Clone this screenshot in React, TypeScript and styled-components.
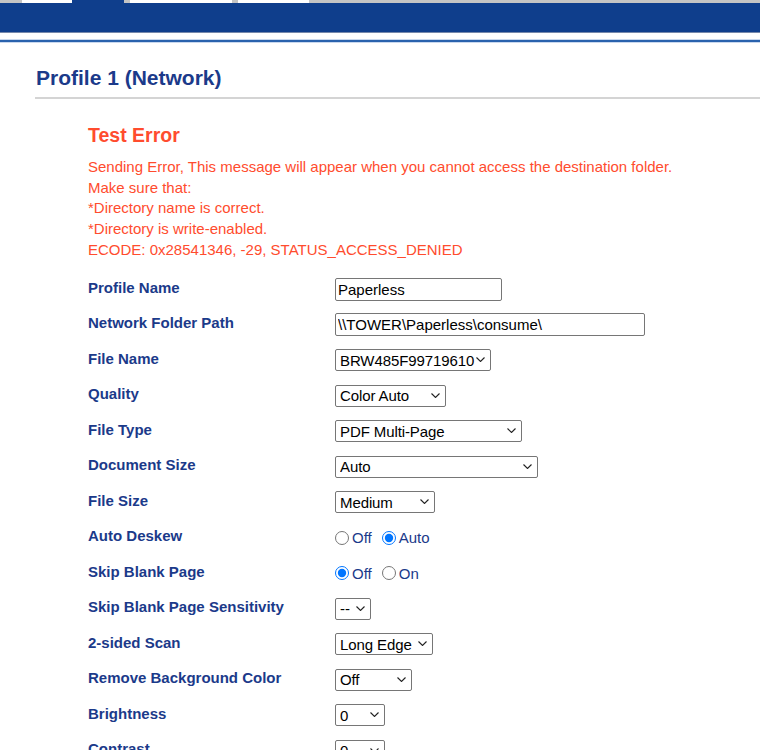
import React from 'react';
import styled, { createGlobalStyle } from 'styled-components';

const GlobalStyle = createGlobalStyle`
  html, body {
    margin: 0;
    padding: 0;
    background: #ffffff;
    overflow: hidden;
  }
  body {
    font-family: 'Liberation Sans', Arial, sans-serif;
    font-size: 15px;
  }
`;

const NAVY = '#1b3a8a';
const BAR = '#0f3e8c';
const ERROR = '#ff4c2e';

const Page = styled.div`
  width: 760px;
  height: 750px;
  overflow: hidden;
`;

const TabStrip = styled.div`
  display: flex;
  height: 3px;
  background: #c4c4c4;
`;

const Tab = styled.div<{ $w: number; $tone: 'gray' | 'white' | 'active' }>`
  flex: 0 0 ${(p) => p.$w}px;
  background: ${(p) => (p.$tone === 'white' ? '#ffffff' : p.$tone === 'active' ? BAR : '#c4c4c4')};
`;

const NavBar = styled.div`
  height: 29px;
  background: ${BAR};
  border-bottom: 1px solid #7688ab;
`;

const AccentLine = styled.div`
  margin-top: 6px;
  height: 2px;
  background: #2a62ad;
  border-top: 1px solid #c9d8ee;
  border-bottom: 1px solid #c9d8ee;
`;

const Title = styled.h1`
  margin: 22px 0 0 35px;
  padding: 0 0 6px 1px;
  font-size: 21px;
  font-weight: bold;
  color: ${NAVY};
  border-bottom: 2px solid #d4d4d4;
  line-height: 26px;
`;

const Content = styled.div`
  padding: 0 0 0 88px;
`;

const ErrorHeading = styled.h2`
  margin: 24px 0 0;
  font-size: 19.5px;
  font-weight: bold;
  color: ${ERROR};
  line-height: 24px;
`;

const ErrorText = styled.p`
  margin: 10px 0 0;
  font-size: 15px;
  line-height: 20.7px;
  color: ${ERROR};
`;

const Form = styled.div`
  margin-top: 11px;
  display: grid;
  grid-template-columns: 247px 1fr;
  grid-auto-rows: 35.5px;
  align-items: center;
`;

const Label = styled.div`
  font-size: 15px;
  font-weight: bold;
  color: ${NAVY};
  line-height: 18px;
  margin-top: -3px;
`;

const Control = styled.div`
  display: flex;
  align-items: center;
  gap: 10px;
`;

const TextInput = styled.input<{ $w: number }>`
  box-sizing: border-box;
  width: ${(p) => p.$w}px;
  height: 23px;
  padding: 1px 2px;
  border: 1px solid #767676;
  border-radius: 2px;
  font-family: 'Liberation Sans', Arial, sans-serif;
  font-size: 15px;
  color: #000;
`;

const SelectWrap = styled.div`
  position: relative;
  display: inline-flex;
`;

const Select = styled.select<{ $w: number }>`
  box-sizing: border-box;
  appearance: none;
  width: ${(p) => p.$w}px;
  height: 22px;
  padding: 0 12px 0 4px;
  border: 1px solid #767676;
  border-radius: 2px;
  background: #fff;
  font-family: 'Liberation Sans', Arial, sans-serif;
  font-size: 15px;
  letter-spacing: -0.1px;
  color: #000;
`;

const Chevron = styled.svg`
  position: absolute;
  right: 6px;
  top: 8px;
  width: 9px;
  height: 5px;
  pointer-events: none;
`;

const RadioLabel = styled.label`
  display: inline-flex;
  align-items: center;
  color: ${NAVY};
  font-size: 15px;

  input {
    margin: 0 3px 0 0;
    width: 14px;
    height: 14px;
  }
`;

type Field =
  | { label: string; kind: 'text'; value: string; w: number }
  | { label: string; kind: 'select'; value: string; w: number }
  | { label: string; kind: 'radio'; options: string[]; checked: number };

const fields: Field[] = [
  { label: 'Profile Name', kind: 'text', value: 'Paperless', w: 167 },
  { label: 'Network Folder Path', kind: 'text', value: '\\\\TOWER\\Paperless\\consume\\', w: 310 },
  { label: 'File Name', kind: 'select', value: 'BRW485F99719610', w: 156 },
  { label: 'Quality', kind: 'select', value: 'Color Auto', w: 111 },
  { label: 'File Type', kind: 'select', value: 'PDF Multi-Page', w: 187 },
  { label: 'Document Size', kind: 'select', value: 'Auto', w: 203 },
  { label: 'File Size', kind: 'select', value: 'Medium', w: 100 },
  { label: 'Auto Deskew', kind: 'radio', options: ['Off', 'Auto'], checked: 1 },
  { label: 'Skip Blank Page', kind: 'radio', options: ['Off', 'On'], checked: 0 },
  { label: 'Skip Blank Page Sensitivity', kind: 'select', value: '--', w: 36 },
  { label: '2-sided Scan', kind: 'select', value: 'Long Edge', w: 98 },
  { label: 'Remove Background Color', kind: 'select', value: 'Off', w: 77 },
  { label: 'Brightness', kind: 'select', value: '0', w: 50 },
  { label: 'Contrast', kind: 'select', value: '0', w: 50 },
];

const tabs: { w: number; tone: 'gray' | 'white' | 'active' }[] = [
  { w: 22, tone: 'gray' },
  { w: 50, tone: 'white' },
  { w: 52, tone: 'active' },
  { w: 6, tone: 'gray' },
  { w: 102, tone: 'white' },
  { w: 6, tone: 'gray' },
  { w: 71, tone: 'white' },
];

const renderControl = (f: Field, i: number) => {
  if (f.kind === 'text') {
    return <TextInput $w={f.w} type="text" defaultValue={f.value} />;
  }
  if (f.kind === 'select') {
    return (
      <SelectWrap>
        <Select $w={f.w} defaultValue={f.value}>
          <option value={f.value}>{f.value}</option>
        </Select>
        <Chevron viewBox="0 0 9 5">
          <path d="M0.5 0.5 L4.5 4.5 L8.5 0.5" fill="none" stroke="#222" strokeWidth="1.1" />
        </Chevron>
      </SelectWrap>
    );
  }
  return (
    <>
      {f.options.map((opt, j) => (
        <RadioLabel key={opt}>
          <input type="radio" name={`r${i}`} defaultChecked={j === f.checked} />
          {opt}
        </RadioLabel>
      ))}
    </>
  );
};

export default function App() {
  return (
    <Page>
      <GlobalStyle />
      <TabStrip>
        {tabs.map((t, i) => (
          <Tab key={i} $w={t.w} $tone={t.tone} />
        ))}
      </TabStrip>
      <NavBar />
      <AccentLine />
      <Title>Profile 1 (Network)</Title>
      <Content>
        <ErrorHeading>Test Error</ErrorHeading>
        <ErrorText>
          Sending Error, This message will appear when you cannot access the destination folder.
          <br />
          Make sure that:
          <br />
          *Directory name is correct.
          <br />
          *Directory is write-enabled.
          <br />
          ECODE: 0x28541346, -29, STATUS_ACCESS_DENIED
        </ErrorText>
        <Form>
          {fields.map((f, i) => (
            <React.Fragment key={f.label}>
              <Label>{f.label}</Label>
              <Control>{renderControl(f, i)}</Control>
            </React.Fragment>
          ))}
        </Form>
      </Content>
    </Page>
  );
}
